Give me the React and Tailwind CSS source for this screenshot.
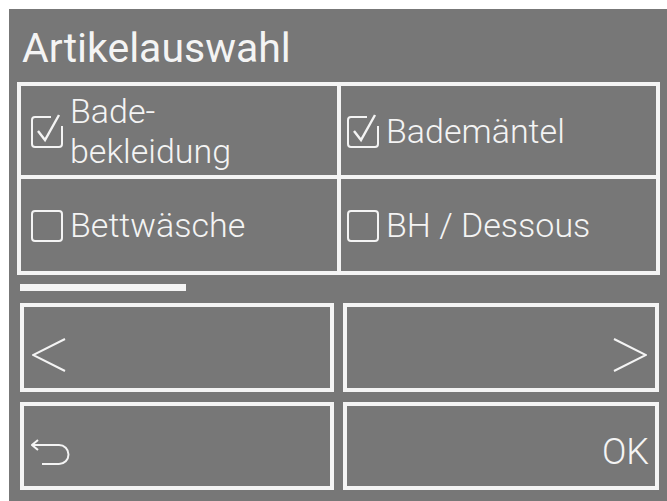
const font = { fontFamily: "Roboto, 'Liberation Sans', sans-serif" };

function Box({ checked }) {
  return (
    <svg width="32" height="34" viewBox="0 0 32 34" fill="none" stroke="#f4f4f4" strokeWidth="2" className="shrink-0">
      {checked ? (
        <>
          <path d="M20 3 H4 Q1 3 1 6 V30 Q1 33 4 33 H28 Q31 33 31 30 V12" />
          <polyline points="7,17 14,26 28,1" strokeWidth="2.4" />
        </>
      ) : (
        <rect x="1" y="3" width="30" height="30" rx="3" />
      )}
    </svg>
  );
}

function Cell({ checked, children, left }) {
  return (
    <div className={`bg-[#777777] flex items-center gap-[7px] ${left ? "pl-[10px]" : "pl-[6px]"}`}>
      <Box checked={checked} />
      <div className="text-[34px] font-light text-[#f4f4f4] leading-[40px]">{children}</div>
    </div>
  );
}

export default function App() {
  return (
    <div className="w-[667px] h-[501px] bg-white overflow-hidden" style={font}>
      <div className="ml-[9px] mt-[9px] w-[658px] h-[492px] bg-[#777777] pt-[18px]">
        <div className="pl-[13px] text-[41px] leading-[42px] h-[42px] text-[#f4f4f4]">Artikelauswahl</div>

        <div className="ml-[8px] mt-[13px] w-[643px] h-[193px] bg-[#f4f4f4] p-[4px] grid grid-cols-[316px_315px] grid-rows-[89px_92px] gap-[4px]">
          <Cell checked left>
            <span className="block">Bade-</span>
            <span className="block">bekleidung</span>
          </Cell>
          <Cell checked>Bademäntel</Cell>
          <Cell left>Bettwäsche</Cell>
          <Cell>BH / Dessous</Cell>
        </div>

        <div className="ml-[11px] mt-[9px] w-[166px] h-[7px] bg-[#f4f4f4]" />

        <div className="ml-[11px] mt-[12px] grid grid-cols-[314px_316px] grid-rows-[89px_88px] gap-x-[9px] gap-y-[10px]">
          <button className="border-4 border-[#f4f4f4] flex items-center pl-[8px] pt-[15px]">
            <svg width="34" height="34" viewBox="0 0 34 34" fill="none" stroke="#f4f4f4" strokeWidth="2">
              <polyline points="33,1 1,17 33,33" />
            </svg>
          </button>
          <button className="border-4 border-[#f4f4f4] flex items-center justify-end pr-[8px] pt-[15px]">
            <svg width="34" height="34" viewBox="0 0 34 34" fill="none" stroke="#f4f4f4" strokeWidth="2">
              <polyline points="1,1 33,17 1,33" />
            </svg>
          </button>
          <button className="border-4 border-[#f4f4f4] flex items-center pl-[7px] pt-[11px]">
            <svg width="40" height="28" viewBox="0 0 40 28" fill="none" stroke="#f4f4f4" strokeWidth="2">
              <path d="M1 7 H28 A9.5 9.5 0 0 1 28 26 H11" />
              <polyline points="7,2 1,7 7,12" />
            </svg>
          </button>
          <button className="border-4 border-[#f4f4f4] flex items-center justify-end pr-[6px] pt-[11px]">
            <span className="text-[36px] font-light leading-[36px] text-[#f4f4f4]">OK</span>
          </button>
        </div>
      </div>
    </div>
  );
}
